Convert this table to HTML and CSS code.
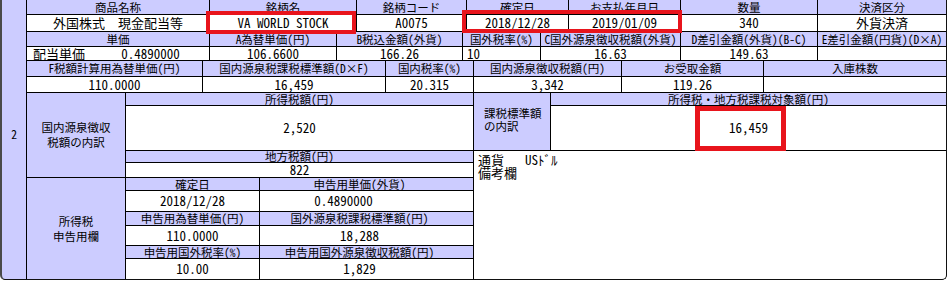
FILE: index.html
```html
<!DOCTYPE html>
<html lang="ja">
<head>
<meta charset="utf-8">
<title>配当明細</title>
<link rel="stylesheet" href="styles.css">
</head>
<body>
<div class="frame">
  <div class="num"><span class="num-text">2</span></div>
  <div class="content">
    <div class="band band1">
      <div class="cell hd">商品名称</div>
      <div class="cell hd">銘柄名</div>
      <div class="cell hd">銘柄コード</div>
      <div class="cell hd">確定日</div>
      <div class="cell hd">お支払年月日</div>
      <div class="cell hd">数量</div>
      <div class="cell hd">決済区分</div>
      <div class="cell val jp">外国株式　現金配当等</div>
      <div class="cell val">VA WORLD STOCK</div>
      <div class="cell val">A0075</div>
      <div class="cell val">2018/12/28</div>
      <div class="cell val">2019/01/09</div>
      <div class="cell val">340</div>
      <div class="cell val jp">外貨決済</div>
    </div>
    <div class="band band2">
      <div class="cell hd">単価</div>
      <div class="cell hd">A為替単価(円)</div>
      <div class="cell hd">B税込金額(外貨)</div>
      <div class="cell hd">国外税率(%)</div>
      <div class="cell hd">C国外源泉徴収税額(外貨)</div>
      <div class="cell hd">D差引金額(外貨)(B-C)</div>
      <div class="cell hd">E差引金額(円貨)(D×A)</div>
      <div class="cell val split"><span class="split-label">配当単価</span><span class="split-num">0.4890000</span></div>
      <div class="cell val">106.6600</div>
      <div class="cell val">166.26</div>
      <div class="cell val left">10</div>
      <div class="cell val">16.63</div>
      <div class="cell val">149.63</div>
      <div class="cell val"></div>
    </div>
    <div class="band band3">
      <div class="cell hd">F税額計算用為替単価(円)</div>
      <div class="cell hd">国内源泉税課税標準額(D×F)</div>
      <div class="cell hd">国内税率(%)</div>
      <div class="cell hd">国内源泉徴収税額(円)</div>
      <div class="cell hd">お受取金額</div>
      <div class="cell hd">入庫株数</div>
      <div class="cell val">110.0000</div>
      <div class="cell val">16,459</div>
      <div class="cell val">20.315</div>
      <div class="cell val">3,342</div>
      <div class="cell val">119.26</div>
      <div class="cell val"></div>
    </div>
    <div class="sec2">
      <div class="cell hd label s2-label1">国内源泉徴収<br>税額の内訳</div>
      <div class="cell hd s2-wide s2-r1">所得税額(円)</div>
      <div class="cell val s2-wide s2-r2">2,520</div>
      <div class="cell hd s2-wide s2-r3">地方税額(円)</div>
      <div class="cell val s2-wide s2-r4">822</div>
      <div class="cell hd label s2-label2">所得税<br>申告用欄</div>
      <div class="cell hd s2-c2 s2-r5">確定日</div>
      <div class="cell hd s2-c3 s2-r5 shift">申告用単価(外貨)</div>
      <div class="cell val s2-c2 s2-r6">2018/12/28</div>
      <div class="cell val s2-c3 s2-r6 shift-more">0.4890000</div>
      <div class="cell hd s2-c2 s2-r7">申告用為替単価(円)</div>
      <div class="cell hd s2-c3 s2-r7 shift">国外源泉税課税標準額(円)</div>
      <div class="cell val s2-c2 s2-r8">110.0000</div>
      <div class="cell val s2-c3 s2-r8 shift">18,288</div>
      <div class="cell hd s2-c2 s2-r9">申告用国外税率(%)</div>
      <div class="cell hd s2-c3 s2-r9 shift">申告用国外源泉徴収税額(円)</div>
      <div class="cell val s2-c2 s2-r10">10.00</div>
      <div class="cell val s2-c3 s2-r10 shift">1,829</div>
      <div class="cell hd label-left s2-label3">課税標準額<br>の内訳</div>
      <div class="cell hd s2-c5 s2-r1">所得税・地方税課税対象額(円)</div>
      <div class="cell val s2-c5 s2-r2">16,459</div>
      <div class="note s2-note">
        <div class="note-line"><span class="note-key">通貨</span><span class="note-val">USﾄﾞﾙ</span></div>
        <div class="note-line">備考欄</div>
      </div>
    </div>
  </div>
  <div class="mark mark1"></div>
  <div class="mark mark2"></div>
  <div class="mark mark3"></div>
</div>
</body>
</html>
```
FILE: styles.css
```css
html, body {
  margin: 0;
  padding: 0;
  background: #ffffff;
}

.frame {
  position: relative;
  display: flex;
  width: 944px;
  height: 279px;
  border-left: 2px solid #4a4a4a;
  border-right: 1px solid #111;
  border-bottom: 1px solid #111;
  border-radius: 0 0 5px 5px;
  overflow: hidden;
  background: #000;
  font-family: "Noto Sans Mono CJK JP", "Noto Sans CJK JP", "DejaVu Sans Mono", monospace;
  color: #000;
}

.num {
  width: 24px;
  margin-right: 1px;
  background: #ccccff;
  display: flex;
  justify-content: center;
  padding-top: 127px;
  box-sizing: border-box;
  font-size: 11.5px;
  line-height: 14px;
}

.content {
  width: 919px;
  display: flex;
  flex-direction: column;
  gap: 1px;
  background: #000;
}

.band {
  display: grid;
  gap: 1px;
  background: #000;
}

.band1 {
  grid-template-columns: 182px 146px 109px 101px 111px 136px 128px;
  grid-template-rows: 14px 16px;
}

.band2 {
  grid-template-columns: 182px 126px 125px 77px 139px 136px 128px;
  grid-template-rows: 14px 13px;
}

.band3 {
  grid-template-columns: 175px 182px 87px 147px 141px 182px;
  grid-template-rows: 15px 15px;
}

.cell {
  display: flex;
  align-items: center;
  justify-content: center;
  white-space: nowrap;
  overflow: visible;
  min-width: 0;
}

.hd {
  background: #ccccff;
  font-size: 11.5px;
  line-height: 11px;
}

.val {
  background: #ffffff;
  font-size: 13px;
  line-height: 12px;
}

.left {
  justify-content: flex-start;
  padding-left: 4px;
}

.split {
  justify-content: flex-start;
}

.split-label {
  width: 65px;
  padding-left: 6px;
  box-sizing: border-box;
}

.split-num {
  flex: 1;
  text-align: center;
}

.sec2 {
  flex: 1;
  display: grid;
  gap: 1px;
  background: #000;
  grid-template-columns: 98px 133px 213px 76px 395px;
  grid-template-rows: 12px 44px 11px 14px 12px 20px 13px 19px 12px 20px;
}

.label {
  flex-direction: column;
  line-height: 15px;
  text-align: center;
}

.label-left {
  flex-direction: column;
  align-items: flex-start;
  padding-left: 10px;
  line-height: 13px;
  padding-bottom: 3px;
}

.s2-label1 { grid-column: 1; grid-row: 1 / 5; }
.s2-label2 { grid-column: 1; grid-row: 5 / 11; }
.s2-label3 { grid-column: 4; grid-row: 1 / 3; }
.s2-wide { grid-column: 2 / 4; }
.s2-c2 { grid-column: 2; }
.s2-c3 { grid-column: 3; }
.s2-c5 { grid-column: 5; }
.s2-r1 { grid-row: 1; }
.s2-r2 { grid-row: 2; }
.s2-r3 { grid-row: 3; }
.s2-r4 { grid-row: 4; }
.s2-r5 { grid-row: 5; }
.s2-r6 { grid-row: 6; }
.s2-r7 { grid-row: 7; }
.s2-r8 { grid-row: 8; }
.s2-r9 { grid-row: 9; }
.s2-r10 { grid-row: 10; }

.shift { padding-right: 14px; }
.shift-more { padding-right: 46px; }

.s2-note {
  grid-column: 4 / 6;
  grid-row: 3 / 11;
}

.note {
  background: #ffffff;
  display: flex;
  flex-direction: column;
  align-items: flex-start;
  justify-content: flex-start;
  padding: 2px 0 0 4px;
  font-size: 13px;
  line-height: 13px;
}

.note-line {
  display: flex;
}

.note-key {
  width: 47px;
}

.mark {
  position: absolute;
  border: 4px solid #e8141c;
  box-sizing: border-box;
  pointer-events: none;
}

.mark1 { left: 204px; top: 11px; width: 150px; height: 23px; }
.mark2 { left: 460px; top: 10px; width: 220px; height: 23px; }
.mark3 { left: 693px; top: 106px; width: 91px; height: 45px; border-width: 5px; }
```
